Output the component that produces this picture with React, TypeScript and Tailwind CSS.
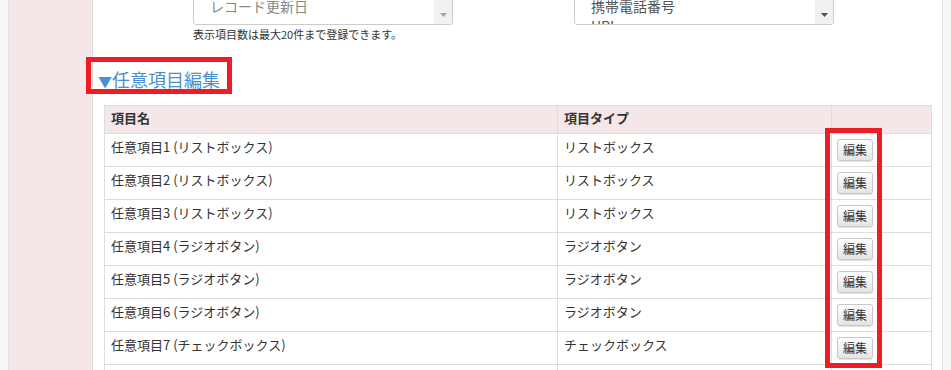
const rows = [
  { name: "任意項目1 (リストボックス)", type: "リストボックス" },
  { name: "任意項目2 (リストボックス)", type: "リストボックス" },
  { name: "任意項目3 (リストボックス)", type: "リストボックス" },
  { name: "任意項目4 (ラジオボタン)", type: "ラジオボタン" },
  { name: "任意項目5 (ラジオボタン)", type: "ラジオボタン" },
  { name: "任意項目6 (ラジオボタン)", type: "ラジオボタン" },
  { name: "任意項目7 (チェックボックス)", type: "チェックボックス" },
  { name: "任意項目8 (チェックボックス)", type: "チェックボックス" },
];

function ListBox({ items, muted }: { items: string[]; muted?: boolean }) {
  return (
    <div className="flex h-[35px] w-[260px] -mt-[10px] overflow-hidden rounded-[3px] border border-[#cccccc] bg-white">
      <div className="flex-1 overflow-hidden pl-[16px] pt-[5px] text-[14px] leading-[20px]">
        {items.map((it) => (
          <div key={it} className={muted ? "text-[#888888]" : "text-[#555555]"}>
            {it}
          </div>
        ))}
      </div>
      <div className="flex w-[18px] flex-col justify-end items-center bg-[#f1f1f1] pb-[7px]">
        <svg width="7" height="4" viewBox="0 0 7 4">
          <path d="M0 0h7L3.5 4z" fill={muted ? "#a3a3a3" : "#505050"} />
        </svg>
      </div>
    </div>
  );
}

export default function App() {
  return (
    <div
      className="flex h-[370px] w-[951px] overflow-hidden bg-white text-[#333333]"
      style={{ fontFamily: '"Noto Sans CJK JP", "Open Sans", sans-serif' }}
    >
      <div className="w-[9px] shrink-0 border-r border-[#e3e3e3] bg-[#f8f8f8]" />
      <div className="w-[84px] shrink-0 border-r border-[#e2dadb] bg-[#f5e6e7]" />

      <div className="relative flex-1 pl-[11px] pr-[10px]">
        <div className="flex pl-[89px]">
          <div>
            <ListBox items={["レコード更新日"]} muted />
            <p className="mt-[2px] text-[11px] leading-[14px] text-[#333333]">
              表示項目数は最大20件まで登録できます。
            </p>
          </div>
          <div className="ml-[121px]">
            <ListBox items={["携帯電話番号", "URL"]} />
          </div>
        </div>

        <div className="relative mt-[24px] h-[40px] w-fit">
          <a
            href="#"
            className="block -ml-[6px] pt-[1px] text-[18px] leading-[26px] text-[#4a8fd6] underline underline-offset-[2px]"
          >
            <span className="text-[14px]">▼</span>任意項目編集
          </a>
          <div className="absolute -left-[18px] -top-[8px] h-[37px] w-[146px] border-[5px] border-[#ee1c25]" />
        </div>

        <div className="relative">
          <table className="w-[828px] border-collapse text-[13px]">
            <thead>
              <tr className="h-[28px] bg-[#f5e6e7]">
                <th className="w-[453px] border border-[#dddddd] pl-[6px] pb-[4px] text-left font-bold">項目名</th>
                <th className="w-[274px] border border-[#dddddd] pl-[6px] pb-[4px] text-left font-bold">項目タイプ</th>
                <th className="border border-[#dddddd]" />
              </tr>
            </thead>
            <tbody>
              {rows.map((r) => (
                <tr key={r.name} className="h-[33px]">
                  <td className="border border-[#dddddd] pl-[6px] pb-[6px] leading-[18px]">{r.name}</td>
                  <td className="border border-[#dddddd] pl-[6px] pb-[6px] leading-[18px]">{r.type}</td>
                  <td className="border border-[#dddddd] pl-[5px]">
                    <button
                      type="button"
                      className="h-[22px] w-[36px] rounded-[3px] border border-[#c8c8c8] bg-gradient-to-b from-[#ffffff] to-[#e4e4e4] text-[12px] leading-[18px] text-[#333333] shadow-[0_1px_1px_rgba(0,0,0,0.12)]"
                    >
                      編集
                    </button>
                  </td>
                </tr>
              ))}
            </tbody>
          </table>
          <div className="absolute left-[721px] top-[23px] h-[240px] w-[57px] border-[5px] border-[#ee1c25]" />
        </div>
      </div>

      <div className="w-[9px] shrink-0 border-l border-[#e3e3e3] bg-[#f8f8f8]" />
    </div>
  );
}
